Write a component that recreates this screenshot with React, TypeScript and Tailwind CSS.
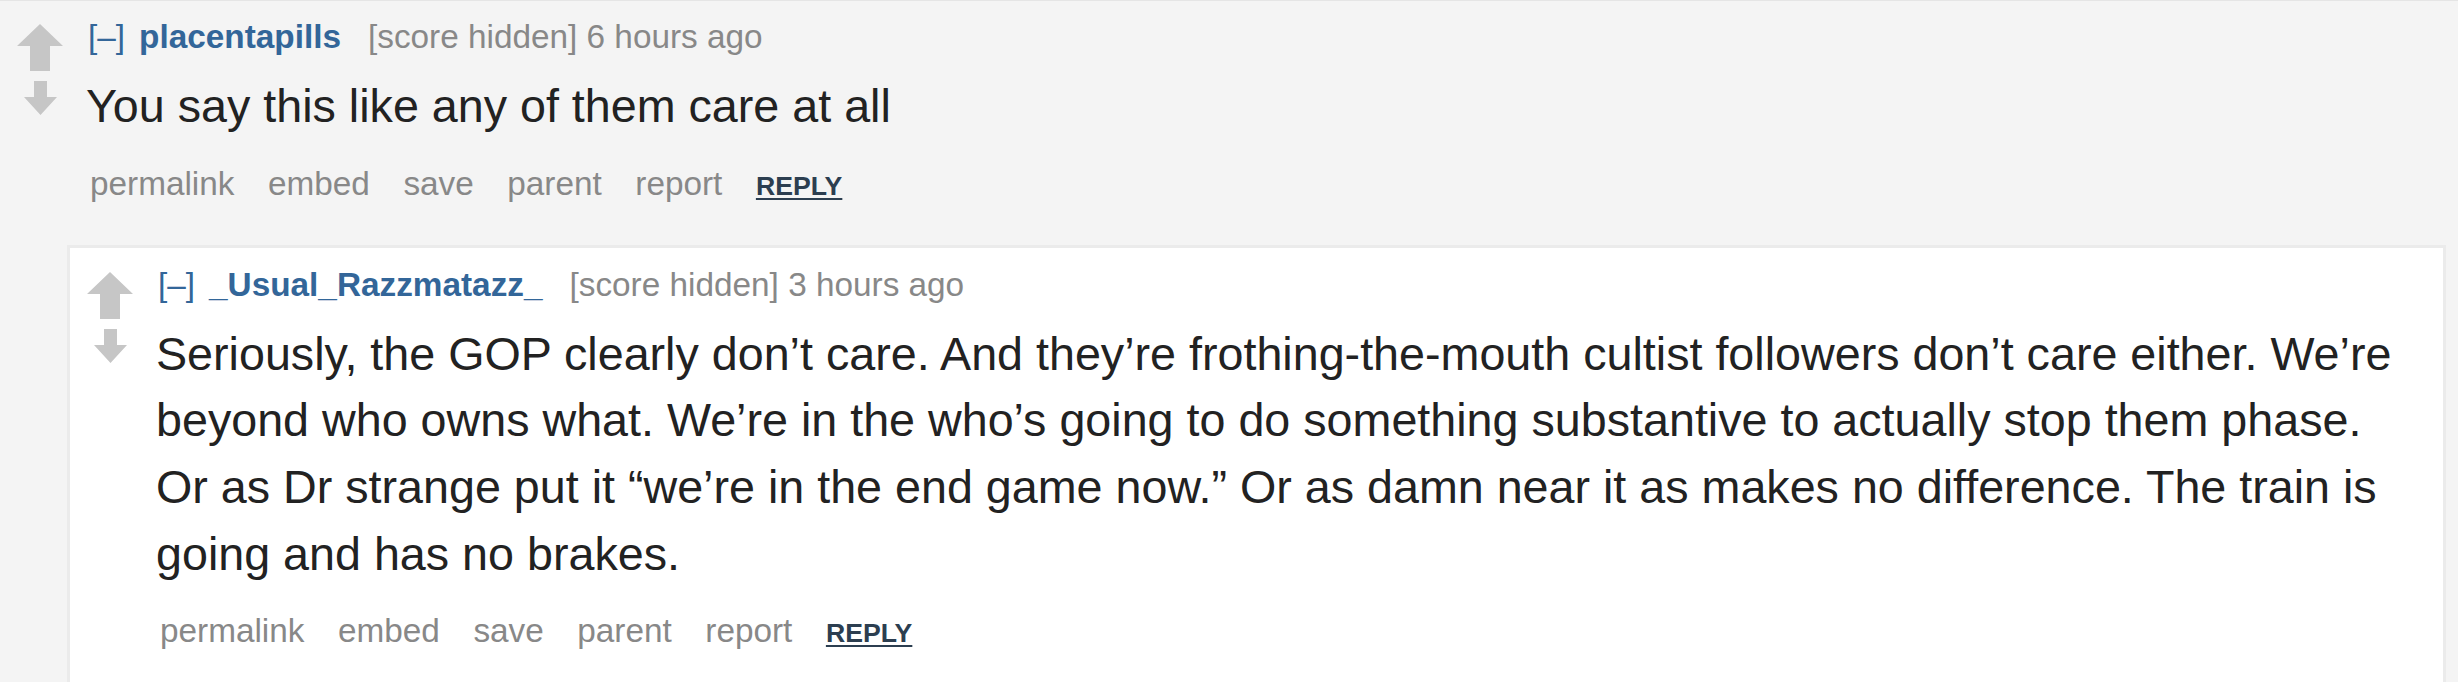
import React from "react";

interface CommentProps {
  author: string;
  age: string;
  children: React.ReactNode;
}

const UpArrow = () => (
  <svg width="46" height="47" viewBox="0 0 46 47" className="blur-[0.5px]">
    <path d="M23 0 L46 22 L33 22 L33 47 L13 47 L13 22 L0 22 Z" fill="#c6c6c6" />
  </svg>
);

const DownArrow = () => (
  <svg width="33" height="34" viewBox="0 0 33 34" className="mt-[10px] blur-[0.5px]">
    <path d="M10 0 H23 V16 H33 L16.5 34 L0 16 H10 Z" fill="#c6c6c6" />
  </svg>
);

const actions = ["permalink", "embed", "save", "parent", "report"];

// one comment row: vote arrows on the left, tagline / body / buttons on the right
const Comment: React.FC<CommentProps> = ({ author, age, children }) => {
  return (
    <div className="flex pr-[33px]">
      <div className="flex w-[80px] shrink-0 flex-col items-center pt-[7px]">
        <UpArrow />
        <DownArrow />
      </div>
      <div className="ml-[8px] min-w-0 flex-1">
        <div className="flex items-baseline text-[33.33px] leading-[40px]">
          <span className="text-[#369]">[–]</span>
          <span className="ml-[14px] font-bold text-[#369]">{author}</span>
          <span className="ml-[27px] text-[#888]">[score hidden] {age}</span>
        </div>
        <div className="-ml-[2px] mt-[16px] text-[46.67px] leading-[66.67px] text-[#222]">{children}</div>
        <ul className="ml-[2px] mt-[24px] flex items-baseline gap-[33.5px] text-[33.33px] leading-[40px] text-[#888]">
          {actions.map((a) => (
            <li key={a}>{a}</li>
          ))}
          <li className="text-[26.67px] font-bold uppercase text-[#2c3e50] underline decoration-[2px] underline-offset-[3px]">
            reply
          </li>
        </ul>
      </div>
    </div>
  );
};

export default function App() {
  return (
    <div className="min-h-screen border-t border-[#e5e5e5] bg-[#f4f4f4] pt-[16px] font-['Liberation_Sans',Arial,sans-serif]">
      <Comment author="placentapills" age="6 hours ago">
        You say this like any of them care at all
      </Comment>

      <div className="ml-[67px] mr-[12px] mt-[39px] border-[3px] border-[#ebebeb] bg-white pb-[80px] pt-[17px]">
        <Comment author="_Usual_Razzmatazz_" age="3 hours ago">
          Seriously, the GOP clearly don’t care. And they’re frothing-the-mouth cultist followers don’t care either.
          We’re beyond who owns what. We’re in the who’s going to do something substantive to actually stop them
          phase. Or as Dr strange put it “we’re in the end game now.” Or as damn near it as makes no difference. The
          train is going and has no brakes.
        </Comment>
      </div>
    </div>
  );
}
